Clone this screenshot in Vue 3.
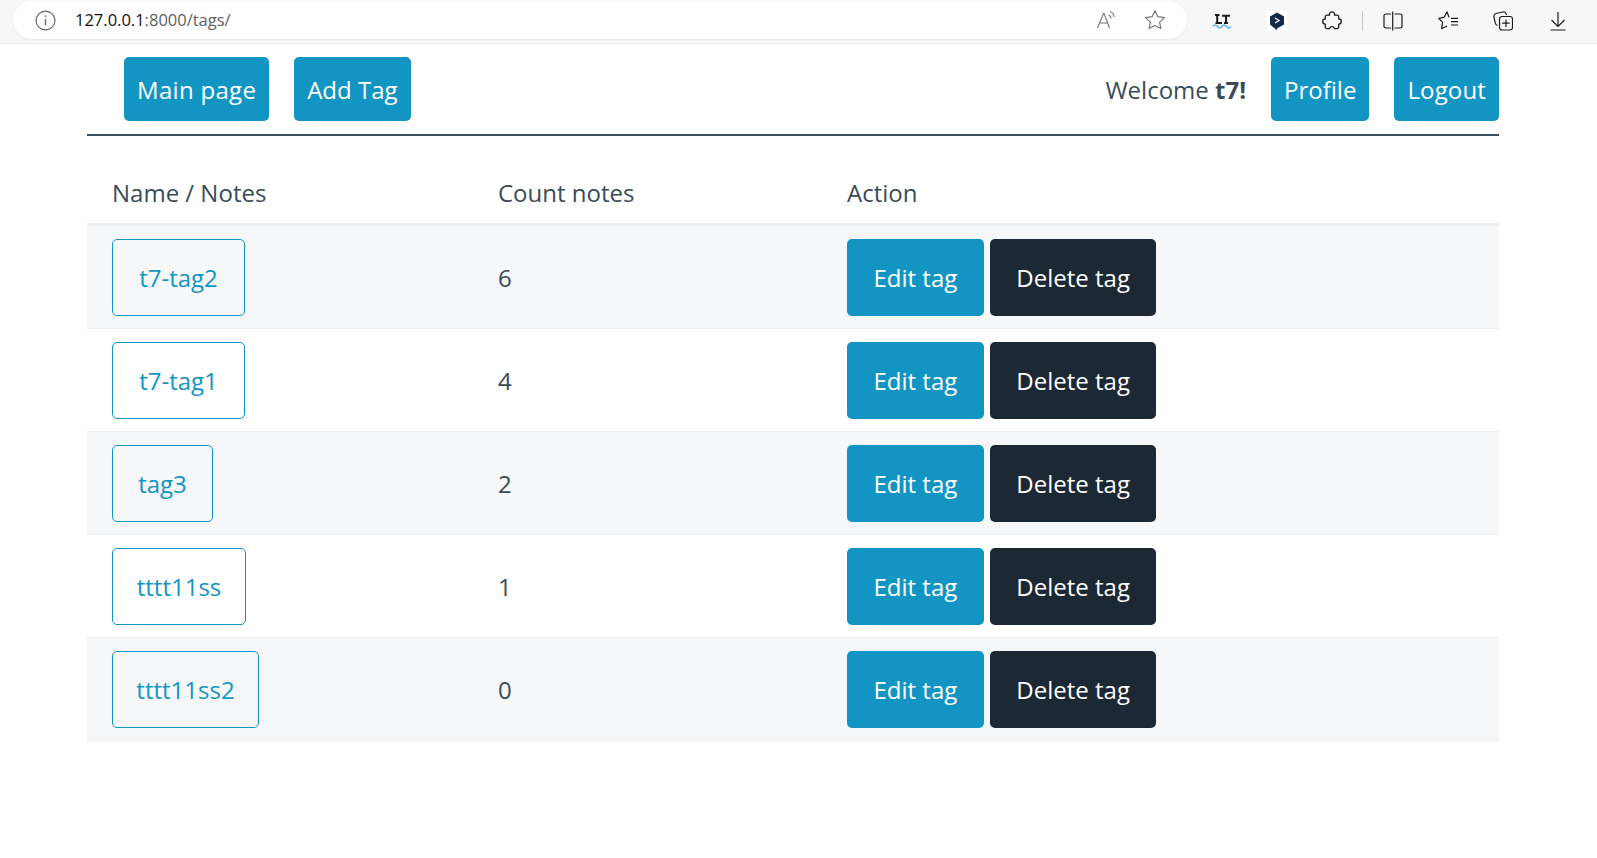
<script setup>
// widths are read off the screenshot, the font here is a bit different
const tags = [
  { name: "t7-tag2", count: 6, width: 133 },
  { name: "t7-tag1", count: 4, width: 133 },
  { name: "tag3", count: 2, width: 101 },
  { name: "tttt11ss", count: 1, width: 134 },
  { name: "tttt11ss2", count: 0, width: 147 },
];
</script>

<template>
  <div class="browser-bar">
    <div class="address">
      <svg class="info" viewBox="0 0 20 20" width="21" height="21" fill="none" stroke="#666" stroke-width="1.1">
        <circle cx="10" cy="10" r="9" />
        <path d="M10 8.500v6" stroke-width="1.300" />
        <circle cx="10" cy="5.800" r="0.900" fill="#666" stroke="none" />
      </svg>
      <span class="url"><b>127.0.0.1</b>:8000/tags/</span>
      <div class="address-icons">
        <svg viewBox="0 0 20 20" width="20" height="20" fill="none" stroke="#777" stroke-width="1.1">
          <path d="M1.500 18 7.500 3.500h.6L13.500 18M3.800 13h8" />
          <path d="M12.500 5c1.500.6 2.500 1.900 2.700 3.500M14 1.500c2.500 1 4 3.200 4.300 5.500" />
        </svg>
        <svg viewBox="0 0 20 20" width="22" height="22" fill="none" stroke="#777" stroke-width="1.100" stroke-linejoin="round">
          <path d="m10 1.500 2.600 5.500 6 .8-4.400 4.100 1.100 5.900L10 15l-5.300 2.800 1.100-5.900L1.400 7.800l6-.8z" />
        </svg>
      </div>
    </div>
    <div class="tools">
      <svg viewBox="0 0 20 20" width="20" height="20">
        <path d="M3 4h4.500M5.200 4v8M3.500 12h6.500M10 4.700h8M14 4.700v7.300M12 12h4" fill="none" stroke="#1b1b1b" stroke-width="2" />
        <path d="M1 15.500c1.500-2 3-2 4.500 0s3 2 4.500 0 3-2 4.500 0 3 2 4.500 0" fill="none" stroke="#5ab4f0" stroke-width="1.600" />
      </svg>
      <svg viewBox="0 0 20 20" width="20" height="20">
        <rect width="20" height="20" fill="#fff" />
        <path d="M10 1.500 17 5.500v8l-7 4-.5 2-1-1.500L3 13.500v-8z" fill="#0f2b46" />
        <path d="m8 7 4 2.500-4 2.500" fill="none" stroke="#fff" stroke-width="1.300" />
      </svg>
      <svg viewBox="0 0 20 20" width="20" height="20" fill="none" stroke="#1b1b1b" stroke-width="1.300" stroke-linejoin="round">
        <path d="M7.500 4.200a2.600 2.600 0 1 1 5 0H15c1 0 1.700.7 1.700 1.700v2a2.600 2.600 0 0 1 0 5.200v2.800c0 1-.7 1.700-1.700 1.700h-2.500a2.600 2.600 0 0 0-5 0H5c-1 0-1.700-.7-1.700-1.700v-2.800a2.600 2.600 0 0 1 0-5.200v-2c0-1 .7-1.700 1.700-1.700z" />
      </svg>
      <span class="divider"></span>
      <svg viewBox="0 0 20 20" width="20" height="20" fill="none" stroke="#1b1b1b" stroke-width="1.200">
        <path d="M8 3H3C2 3 1 3.600 1 4.500v11c0 .9 1 1.500 2 1.500h5M11.500 3H17c1 0 2 .6 2 1.500v11c0 .9-1 1.500-2 1.500h-5.500M9.700 .5v19" />
      </svg>
      <svg viewBox="0 0 20 20" width="20" height="20" fill="none" stroke="#1b1b1b" stroke-width="1.200" stroke-linejoin="round">
        <path d="M11 6.300 9 .8 6.200 6.200.8 7.300l3.800 4-1 6.400L9 15" />
        <path d="M13 7.300h7M13 10.700h7M13 14h7" />
      </svg>
      <svg viewBox="0 0 20 20" width="20" height="20" fill="none" stroke="#1b1b1b" stroke-width="1.200">
        <path d="M4.500 14.500C3 14 2.500 13 2.200 11.800L.9 6C.6 4 1.500 3 3 2.500L10 1c1.500-.3 3 .3 3.500 3" />
        <rect x="6.500" y="5.500" width="13" height="13.500" rx="2.500" />
        <path d="M13 8.500v7.500M9.200 12.200h7.500" />
      </svg>
      <svg viewBox="0 0 20 20" width="20" height="20" fill="none" stroke="#1b1b1b" stroke-width="1.200">
        <path d="M10 1v14M3.500 9l6.500 6.500L16.500 9M2.500 19h15" />
      </svg>
    </div>
  </div>

  <div class="page">
    <nav class="nav">
      <a class="btn main-link" href="#">Main page</a>
      <a class="btn" href="#">Add Tag</a>
      <span class="welcome">Welcome <b>t7!</b></span>
      <a class="btn" href="#">Profile</a>
      <a class="btn logout" href="#">Logout</a>
    </nav>

    <table class="tags">
      <colgroup>
        <col class="col-name" />
        <col class="col-count" />
        <col />
      </colgroup>
      <thead>
        <tr>
          <th>Name / Notes</th>
          <th>Count notes</th>
          <th>Action</th>
        </tr>
      </thead>
      <tbody>
        <tr v-for="tag in tags" :key="tag.name">
          <td><a class="btn-outline" href="#" :style="{ width: tag.width + 'px' }">{{ tag.name }}</a></td>
          <td class="count">{{ tag.count }}</td>
          <td class="actions">
            <a class="action edit" href="#">Edit tag</a>
            <a class="action delete" href="#">Delete tag</a>
          </td>
        </tr>
      </tbody>
    </table>
  </div>
</template>

<style>
html,
body {
  background: #fff;
}
</style>

<style scoped>
.browser-bar {
  display: flex;
  align-items: flex-start;
  height: 43px;
  background: #f7f7f7;
  border-bottom: 1px solid #ececec;
  font-family: "Open Sans", sans-serif;
}

.address {
  display: flex;
  align-items: center;
  width: 1174px;
  height: 38px;
  margin: 1px 0 0 13px;
  padding: 0 21px 0 22px;
  box-sizing: border-box;
  background: #fff;
  border-radius: 19px;
  box-shadow: 0 1px 2px rgba(0, 0, 0, 0.08);
}

.url {
  margin: 0 0 2px 19px;
  font-size: 16.500px;
  color: #5f5f5f;
}

.url b {
  font-weight: 400;
  color: #111;
}

.address-icons {
  display: flex;
  align-items: center;
  gap: 28px;
  margin-left: auto;
}

.tools {
  display: flex;
  align-items: center;
  height: 41px;
  margin-left: 25px;
  gap: 35px;
}

.divider {
  width: 1px;
  height: 20px;
  margin: 0 -15px;
  background: #c8c8c8;
}

.page {
  width: 1412px;
  margin-left: 87px;
  font-family: "Open Sans", sans-serif;
  font-size: 24px;
  color: #3a4b57;
}

.nav {
  display: flex;
  align-items: center;
  gap: 25px;
  height: 92px;
  padding: 13px 0 13px 37px;
  box-sizing: border-box;
  border-bottom: 2px solid #3b4f5c;
}

.btn {
  padding: 15px 13px 13px;
  line-height: 36px;
  border-radius: 5px;
  color: #fff;
  background: #1295c2;
  text-decoration: none;
}

.main-link {
  letter-spacing: 0.3px;
}

.logout {
  letter-spacing: 0.15px;
}

.welcome {
  margin-left: auto;
  color: #3a4b57;
}

.tags {
  width: 100%;
  margin-top: 31px;
  table-layout: fixed;
  border-collapse: collapse;
}

.col-name {
  width: 386px;
}

.col-count {
  width: 349px;
}

th {
  padding: 8px 25px 12px;
  font-weight: 400;
  text-align: left;
  line-height: 36px;
  border-bottom: 3px solid #ecedef;
}

td {
  height: 102px;
  padding: 0 25px;
  border-bottom: 1px solid #ecedef;
}

tbody tr:nth-child(odd) {
  background: #f6f7f9;
}

.btn-outline {
  display: inline-block;
  box-sizing: border-box;
  padding: 20px 0;
  line-height: 35px;
  text-align: center;
  vertical-align: middle;
  border: 1px solid #1295c2;
  border-radius: 5px;
  color: #1295c2;
  text-decoration: none;
}

.actions {
  white-space: nowrap;
}

.action {
  display: inline-block;
  padding: 20px 26.500px;
  line-height: 37px;
  vertical-align: middle;
  border-radius: 5px;
  color: #fff;
  text-decoration: none;
}

.action + .action {
  margin-left: 6px;
}

.edit {
  background: #1295c2;
}

.delete {
  background: #1c2833;
}
</style>
